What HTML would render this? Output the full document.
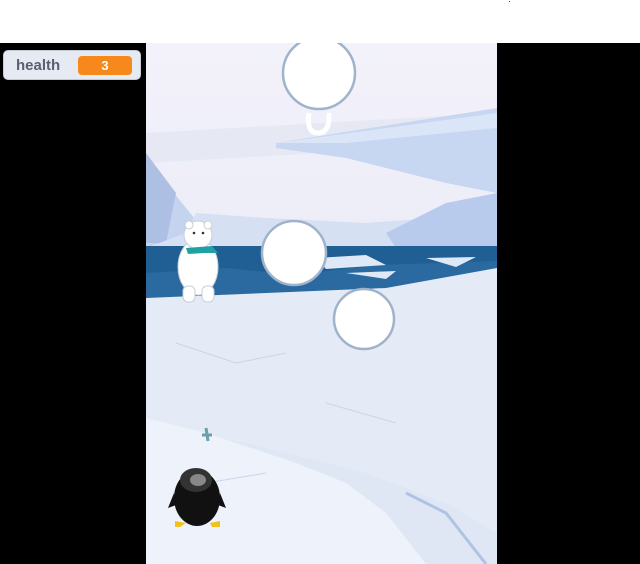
<!DOCTYPE html>
<html><head><style>
body{margin:0;width:640px;height:564px;background:#fff;overflow:hidden;font-family:"Liberation Sans",sans-serif;position:relative}
#bk{position:absolute;left:0;top:43px;width:640px;height:521px;background:#000}
#mon{position:absolute;left:3px;top:50px;width:138px;height:30px;background:#e6eaf2;border:1px solid #c3c9d6;border-radius:5px;box-sizing:border-box}
#mon span{position:absolute;left:12px;top:6px;font-size:15px;font-weight:bold;color:#5a6070}
#mon b{position:absolute;left:74px;top:5px;width:54px;height:19px;background:#f7881c;border-radius:4px;color:#fff;font-size:13px;text-align:center;line-height:19px}
svg{position:absolute;left:146px;top:43px}
</style></head><body>
<div id="bk"></div>
<div style="position:absolute;left:509px;top:1px;width:1px;height:1px;background:#33c"></div>
<svg width="351" height="521" viewBox="0 0 351 521">
<defs><linearGradient id="sky" x1="0" y1="0" x2="0" y2="1"><stop offset="0" stop-color="#f3f2fb"/><stop offset="1" stop-color="#e2e4f3"/></linearGradient></defs>
<rect width="351" height="521" fill="url(#sky)"/>
<path d="M0 90 L351 70 L351 100 L0 120Z" fill="#e6e8f4"/>
<path d="M130 100 L351 65 L351 150 L300 140 L200 115 L130 105Z" fill="#c7d6f1"/>
<path d="M130 100 L351 70 L351 85 L200 100Z" fill="#dbe5f8"/>
<path d="M0 120 L20 140 L60 190 L100 210 L0 215Z" fill="#c4d3ee"/>
<path d="M0 110 L30 150 L20 200 L0 200Z" fill="#aebfe4"/>
<path d="M50 170 L120 175 L220 180 L290 175 L351 150 L351 205 L0 205 L40 190Z" fill="#d6e0f3"/>
<path d="M240 190 L300 160 L351 150 L351 205 L250 205Z" fill="#b9cbec"/>
<rect x="0" y="203" width="351" height="60" fill="#1f5f94"/>
<path d="M0 230 L80 225 L150 232 L230 222 L351 218 L351 263 L0 263Z" fill="#2a6aa0"/>
<path d="M170 215 L220 212 L240 222 L180 226Z M200 230 L250 228 L240 236Z M280 215 L330 214 L310 224Z" fill="#dfe8f6"/>
<path d="M0 255 L120 250 L240 245 L351 225 L351 521 L0 521Z" fill="#e4eaf6"/>
<path d="M0 380 L100 400 L220 430 L300 460 L351 490 L351 521 L0 521Z" fill="#dfe7f5"/>
<path d="M0 375 L60 390 L150 420 L200 440 L240 470 L280 521 L0 521Z" fill="#eef2fa"/>
<path d="M260 450 L300 470 L340 521" stroke="#b0c3e4" stroke-width="3" fill="none"/>
<path d="M30 300 L90 320 L140 310 M180 360 L250 380 M60 440 L120 430" stroke="#c9d5ec" fill="none"/>
<!-- bear -->
<g fill="#fff" stroke="#c8ced8">
<ellipse cx="52" cy="224" rx="20" ry="28"/>
<circle cx="52" cy="192" r="14"/>
<circle cx="43" cy="182" r="4"/><circle cx="62" cy="182" r="4"/>
<rect x="37" y="243" width="12" height="16" rx="5"/><rect x="56" y="243" width="12" height="16" rx="5"/>
</g>
<path d="M40 205 L66 203 L72 210 L58 210 L42 211Z" fill="#1fa2a4"/>
<circle cx="48" cy="190" r="1.3" fill="#333"/><circle cx="57" cy="190" r="1.3" fill="#333"/>
<!-- snowballs -->
<g fill="#fff" stroke="#9fb3cb" stroke-width="2.5">
<circle cx="173" cy="30" r="36"/>
<circle cx="148" cy="210" r="32"/>
<circle cx="218" cy="276" r="30"/>
</g>
<path d="M163 70 Q160 90 172 90 Q184 90 183 70" stroke="#fff" stroke-width="5" fill="none"/>
<!-- fish -->
<path d="M60 385 L62 398 M56 392 L66 392" stroke="#6aa0a8" stroke-width="3"/>
<!-- penguin -->
<ellipse cx="51" cy="455" rx="23" ry="28" fill="#111"/>
<ellipse cx="50" cy="437" rx="16" ry="12" fill="#333"/>
<ellipse cx="52" cy="437" rx="8" ry="6" fill="#888"/>
<path d="M29 478 L40 480 L34 484 L29 484Z M64 480 L74 478 L74 484 L66 484Z" fill="#f1c21a"/>
<path d="M28 450 L22 465 L30 462Z M74 450 L80 465 L72 462Z" fill="#111"/>
</svg>
<div id="mon"><span>health</span><b>3</b></div>
</body></html>
